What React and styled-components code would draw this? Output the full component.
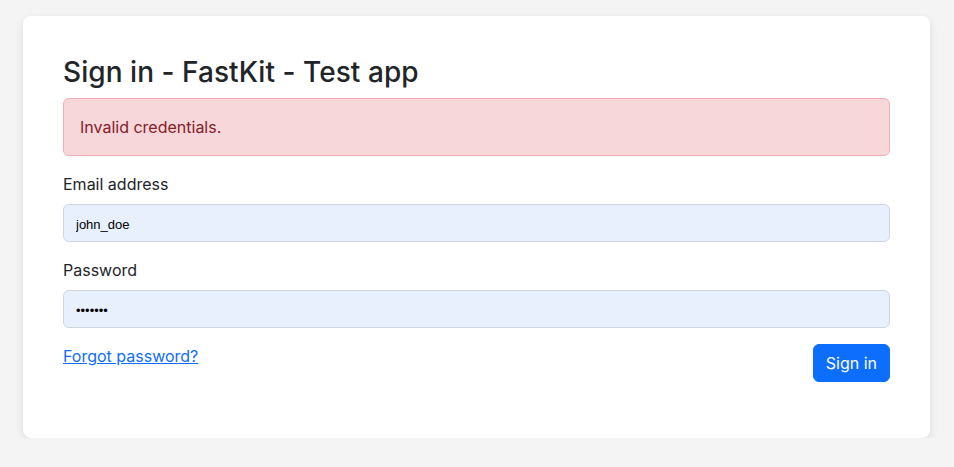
import React from "react";
import styled, { createGlobalStyle } from "styled-components";

const GlobalStyle = createGlobalStyle`
  body {
    margin: 0;
    background: #f4f4f4;
    font-family: Inter, "Noto Sans", sans-serif;
    font-size: 16px;
    line-height: 1.5;
    color: #212529;
  }
`;

const Page = styled.div`
  padding: 16px 24px 0 23px;
`;

const Card = styled.form`
  background: #fff;
  border-radius: 8px;
  box-shadow: 0 3px 10px rgba(0, 0, 0, 0.1);
  padding: 40px;
`;

const Title = styled.h3`
  margin: 0 0 8px;
  font-size: 28px;
  font-weight: 500;
  line-height: 1.2;
  letter-spacing: 0.05px;
`;

const Alert = styled.div`
  background: #f8d7da;
  border: 1px solid #f1aeb5;
  border-radius: 6px;
  color: #842029;
  padding: 16px;
  margin-bottom: 16px;
`;

const Field = styled.div`
  margin-bottom: 16px;
`;

const Label = styled.label`
  display: block;
  margin-bottom: 8px;
`;

const Input = styled.input`
  display: block;
  box-sizing: border-box;
  width: 100%;
  height: 38px;
  padding: 8px 12px 4px;
  border: 1px solid #cfd5de;
  border-radius: 6px;
  background: #e8f0fe;
  color: #000;
  font-family: "Liberation Sans", Arial, sans-serif;
  font-size: 13px;
  outline: none;
`;

const Footer = styled.div`
  display: flex;
  justify-content: space-between;
  align-items: flex-start;
  margin-bottom: 16px;
`;

const Link = styled.a`
  color: #0d6efd;
  text-decoration: underline;
`;

const Button = styled.button`
  height: 38px;
  padding: 6px 12px;
  border: 1px solid #0d6efd;
  border-radius: 6px;
  background: #0d6efd;
  color: #fff;
  font-family: inherit;
  font-size: 16px;
  line-height: 1.5;
  cursor: pointer;
`;

export default function App() {
  return (
    <Page>
      <GlobalStyle />
      <Card onSubmit={(e) => e.preventDefault()}>
        <Title>Sign in - FastKit - Test app</Title>
        <Alert>Invalid credentials.</Alert>
        <Field>
          <Label htmlFor="email">Email address</Label>
          <Input id="email" type="text" defaultValue="john_doe" />
        </Field>
        <Field>
          <Label htmlFor="password">Password</Label>
          <Input id="password" type="password" defaultValue="1234567" />
        </Field>
        <Footer>
          <Link href="#">Forgot password?</Link>
          <Button type="submit">Sign in</Button>
        </Footer>
      </Card>
    </Page>
  );
}
